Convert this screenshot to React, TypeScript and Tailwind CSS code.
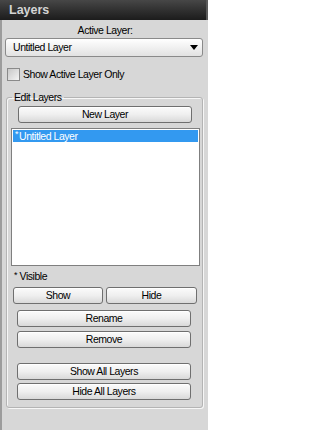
const btn =
  "flex h-[17px] items-center justify-center rounded-[3px] border border-[#6f6f6f] bg-gradient-to-b from-[#fbfbfb] via-[#efefef] to-[#d9d9d9] leading-none text-black shadow-[inset_0_1px_0_#ffffff]";

function Btn({ label, className }: { label: string; className: string }) {
  return <button className={`${btn} ${className}`}>{label}</button>;
}

export default function App() {
  return (
    <div className="flex h-[430px] w-[208px] flex-col bg-[#d7d7d7] font-['Liberation_Sans',Arial,sans-serif] text-[10.5px] tracking-[-0.45px] text-black">
      <div className="flex h-[20px] items-center border-r-2 border-[#5a5a5a] bg-gradient-to-b from-[#474747] to-[#1c1c1c] pl-[9px] text-[12.5px] font-bold tracking-normal text-[#d4d4d4]">
        Layers
      </div>
      <div className="flex flex-1 flex-col border-l-2 border-[#9c9c9c]">
        <div className="mt-[4px] text-center leading-[12px]">Active Layer:</div>
        <div className="mt-[2px] ml-[3px] flex h-[19px] w-[198px] items-center justify-between rounded-[3px] border border-[#8a8a8a] bg-gradient-to-b from-white to-[#e2e2e2] pl-[7px] pr-[2px]">
          <span>Untitled Layer</span>
          <svg width="8" height="5" viewBox="0 0 8 5" className="mr-[2px]">
            <path d="M0 0h8L4 5z" fill="#000" />
          </svg>
        </div>
        <div className="mt-[10px] flex h-[14px] items-center">
          <span className="ml-[5px] h-[13px] w-[13px] border border-[#8a8a8a] bg-gradient-to-br from-[#c8c8c8] to-[#f4f4f4]" />
          <span className="ml-[3px] leading-[12px]">Show Active Layer Only</span>
        </div>
        <fieldset className="mt-[10px] ml-[4px] flex w-[197px] flex-col rounded-[3px] border border-[#b4b4b4] pb-[7px] shadow-[inset_1px_1px_0_#f6f6f6,1px_1px_0_#f6f6f6]">
          <legend className="ml-[5px] px-[2px] leading-[12px]">Edit Layers</legend>
          <Btn label="New Layer" className="mt-[3px] ml-[11px] w-[174px]" />
          <div className="mt-[5px] ml-[4px] h-[138px] w-[189px] border border-[#7f7f7f] bg-white p-[1px]">
            <div className="flex h-[12px] items-center bg-[#3399f0] pl-[2px] leading-none text-white">
              <span className="mr-[1px] -mt-[3px] text-[9px]">*</span>Untitled Layer
            </div>
          </div>
          <div className="mt-[4px] ml-[7px] leading-[12px]">
            <span className="relative -top-[2px] text-[9px]">*</span> Visible
          </div>
          <div className="mt-[4px] flex">
            <Btn label="Show" className="ml-[6px] w-[90px]" />
            <Btn label="Hide" className="ml-[3px] w-[91px]" />
          </div>
          <Btn label="Rename" className="mt-[6px] ml-[10px] w-[174px]" />
          <Btn label="Remove" className="mt-[4px] ml-[10px] w-[174px]" />
          <Btn label="Show All Layers" className="mt-[15px] ml-[10px] w-[174px]" />
          <Btn label="Hide All Layers" className="mt-[3px] ml-[10px] w-[174px]" />
        </fieldset>
      </div>
    </div>
  );
}
